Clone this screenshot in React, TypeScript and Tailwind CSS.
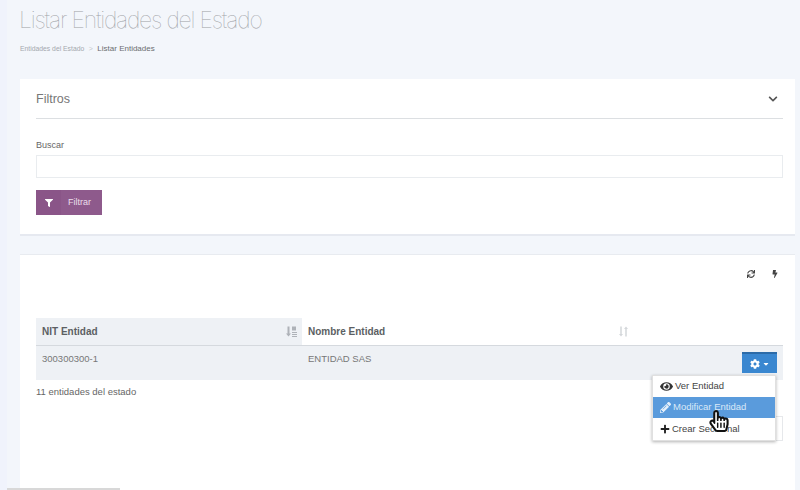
import { FaBolt, FaCaretDown, FaChevronDown, FaCog, FaEye, FaFilter, FaHandPointer, FaPencilAlt, FaPlus, FaRegHandPointer, FaSync } from "react-icons/fa";

export default function App() {
  return (
    <div className="relative flex h-[490px] w-[800px] flex-col overflow-hidden border-l-[7px] border-[#f0f3fc] bg-[#f3f6fb] pl-[13px] pr-[5px] font-['Liberation_Sans',sans-serif] text-[#555]">
      <header className="h-[79px] shrink-0">
        <h1 className="-ml-px pt-[5px] font-['Inter',sans-serif] text-[23px] font-thin leading-[30px] tracking-[-1.22px] text-[#a0a2a6]">Listar Entidades del Estado</h1>
        <nav className="mt-[9px] flex items-center leading-[10px]">
          <span className="text-[6.8px] text-[#a4a8ae]">Entidades del Estado</span>
          <span className="mx-[4.5px] text-[7px] text-[#c5c8cc]">&gt;</span>
          <span className="text-[8px] text-[#6b6d70]">Listar Entidades</span>
        </nav>
      </header>

      <section className="h-[157px] shrink-0 border-b-2 border-[#e6e9f0] bg-white pl-4 pr-3">
        <div className="flex h-[40px] items-center justify-between border-b border-[#dcdfe2] pt-[1px]">
          <h2 className="text-[12.5px] font-normal text-[#777]">Filtros</h2>
          <FaChevronDown className="mr-[5px] text-[10px] text-[#555]" />
        </div>
        <label className="mt-[20px] block text-[9px] leading-[12px] text-[#666]">Buscar</label>
        <div className="mt-[4px] h-[23px] border border-[#e9ecef] bg-white"></div>
        <button className="mt-[12px] flex h-[25px] w-[66px] items-center bg-[#8e5a8c] text-[9px] text-[#ecdfeb]">
          <span className="flex h-full w-[25px] items-center justify-center bg-[#8a5588]"><FaFilter className="text-[8px] text-white" /></span>
          <span className="ml-[7px] pt-[1px]">Filtrar</span>
        </button>
      </section>

      <section className="relative mt-[18px] flex-1 border-t border-[#e8ebf0] bg-white pl-4 pr-3">
        <div className="flex h-[38px] items-center justify-end gap-[16px] pr-[4px] text-[#444]">
          <FaSync className="text-[8px]" />
          <FaBolt className="text-[8px]" />
        </div>
        <div className="mt-[25px] text-[9.5px]">
          <div className="flex h-[28px] border-b border-[#d5d9de] text-[10px] font-bold text-[#5c5f63]">
            <div className="flex w-[266px] items-center justify-between bg-[#eef1f5] pl-[6px] pr-[5px]">
              <span>NIT Entidad</span>
              <svg width="11" height="11" viewBox="0 0 11 11" className="text-[#aeb2b8]" fill="currentColor">
                <path d="M1.5 0.5h2v7h1.5l-2.5 3-2.5-3h1.5z" />
                <rect x="6" y="0.5" width="4" height="4" />
                <rect x="6" y="6" width="5" height="1" />
                <rect x="6" y="8" width="5" height="1" />
                <rect x="6" y="10" width="5" height="1" />
              </svg>
            </div>
            <div className="flex w-[326px] items-center justify-between pl-[6px]">
              <span>Nombre Entidad</span>
              <svg width="9" height="11" viewBox="0 0 9 11" className="text-[#d4d7da]" fill="currentColor">
                <path d="M1.25 0.5h1.5v7.5h1.25l-2 2.5-2-2.5h1.25z" />
                <path d="M6.25 10.5h1.5v-7.5h1.25l-2-2.5-2 2.5h1.25z" />
              </svg>
            </div>
          </div>
          <div className="flex h-[34px] bg-[#eef1f5] text-[#777]">
            <div className="w-[266px] pl-[6px] pt-[6px]">300300300-1</div>
            <div className="flex-1 pl-[6px] pt-[6px]">ENTIDAD SAS</div>
            <div className="pr-[6px] pt-[6px]">
              <div className="flex h-[21px] w-[35px] items-center justify-center gap-[2px] border-t-2 border-[#2c6ba8] bg-[#3a87d0] text-white">
                <FaCog className="text-[10px]" />
                <FaCaretDown className="text-[8px]" />
              </div>
            </div>
          </div>
        </div>
        <p className="mt-[6px] text-[9.5px] leading-[12px] text-[#666]">11 entidades del estado</p>
        <div className="mt-[18px] flex justify-end">
          <div className="flex h-[25px] w-[90px] border border-[#e6e8eb] bg-white">
            <div className="ml-[11px] h-full w-[27px] border-b-2 border-[#3a87d0]"></div>
          </div>
        </div>

        <div className="absolute left-[632px] top-[120px] w-[124px] border border-[#e0e0e0] bg-white text-[9.5px] text-[#444] shadow-[0_1px_3px_rgba(0,0,0,0.3)]">
          <div className="flex h-[21px] items-center gap-[2px] pl-[7px]"><FaEye className="text-[13px] text-[#333]" />Ver Entidad</div>
          <div className="flex h-[21px] items-center gap-[2px] bg-[#5a9bdc] pl-[7px] text-[#d9e9f8]"><FaPencilAlt className="text-[11px] text-[#e6f0fa]" />Modificar Entidad</div>
          <div className="flex h-[22px] items-center gap-[2px] pl-[7px]"><FaPlus className="text-[10px] text-[#222]" />Crear Seccional</div>
        </div>
        <FaHandPointer className="absolute left-[688px] top-[155px] text-[22px] text-white" />
        <FaRegHandPointer className="absolute left-[688px] top-[155px] text-[22px] text-[#111]" />
      </section>

      <div className="absolute bottom-0 left-[-7px] h-[2px] w-[120px] bg-[#d8d8d8]"></div>
    </div>
  );
}
